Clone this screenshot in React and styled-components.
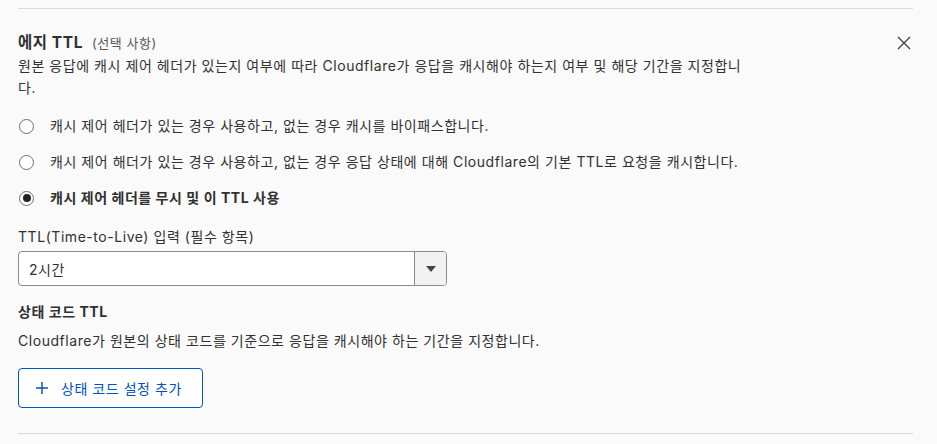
import React, { useState } from 'react'
import styled, { createGlobalStyle } from 'styled-components'

const Global = createGlobalStyle`
  html, body { margin: 0; padding: 0; background: #fafafa; }
  body {
    font-family: Inter, "Noto Sans CJK KR", sans-serif;
    color: #313131;
    letter-spacing: 0.55px;
    -webkit-font-smoothing: antialiased;
  }
`

const Page = styled.div`
  padding: 8px 24px 0 18px;
  width: 937px;
  box-sizing: border-box;
`

const Section = styled.section`
  border-top: 1px solid #d9d9d9;
  border-bottom: 1px solid #d9d9d9;
  padding: 22px 0 25px;
`

const Header = styled.div`
  display: flex;
  justify-content: space-between;
  align-items: center;
`

const Title = styled.h3`
  margin: 0;
  font-size: 15.5px;
  font-weight: 700;
  color: #313131;
  line-height: 24px;
`

const Optional = styled.span`
  font-size: 13px;
  font-weight: 400;
  color: #595959;
  margin-left: 9px;
`

const CloseButton = styled.button`
  border: 0;
  background: none;
  padding: 0;
  margin-right: 2px;
  width: 14px;
  height: 14px;
  display: flex;
  color: #404040;
  cursor: pointer;
`

const Desc = styled.p`
  margin: ${p => p.$mt || 0}px 0 0;
  font-size: 14px;
  line-height: 22px;
  color: #313131;
  max-width: ${p => p.$max || 'none'};
`

const RadioList = styled.div`
  display: flex;
  flex-direction: column;
  gap: 14px;
  margin-top: 16px;
`

const RadioRow = styled.label`
  display: flex;
  align-items: center;
  gap: 16px;
  font-size: 14px;
  line-height: 22px;
  font-weight: ${p => (p.$checked ? 700 : 400)};
  padding-left: 1px;
  cursor: pointer;
`

const Circle = styled.span`
  width: 15px;
  height: 15px;
  border-radius: 50%;
  border: 1px solid #6e6e6e;
  box-sizing: border-box;
  background: #fff;
  display: flex;
  align-items: center;
  justify-content: center;
  flex-shrink: 0;

  &::after {
    content: '';
    width: 8px;
    height: 8px;
    border-radius: 50%;
    background: #222;
    display: ${p => (p.$checked ? 'block' : 'none')};
  }
`

const FieldLabel = styled.div`
  font-size: 14px;
  line-height: 22px;
  margin-top: 17px;
`

const Select = styled.div`
  margin-top: 3px;
  width: 429px;
  height: 35px;
  box-sizing: border-box;
  border: 1px solid #8a8a8a;
  border-radius: 4px;
  background: #fff;
  display: flex;
  overflow: hidden;
`

const SelectValue = styled.div`
  flex: 1;
  padding-left: 10px;
  display: flex;
  align-items: center;
  font-size: 14px;
`

const SelectArrow = styled.div`
  width: 31px;
  border-left: 1px solid #8a8a8a;
  background: #f2f2f2;
  display: flex;
  align-items: center;
  justify-content: center;
`

const SubTitle = styled.h4`
  margin: 15px 0 0;
  font-size: 14px;
  line-height: 22px;
  font-weight: 700;
`

const AddButton = styled.button`
  margin-top: 16px;
  height: 40px;
  padding: 0 20px 0 17px;
  border: 1px solid #0051c3;
  border-radius: 4px;
  background: #fff;
  color: #0051c3;
  font-family: inherit;
  font-size: 14px;
  letter-spacing: inherit;
  display: flex;
  align-items: center;
  gap: 13px;
  cursor: pointer;
`

const options = [
  '캐시 제어 헤더가 있는 경우 사용하고, 없는 경우 캐시를 바이패스합니다.',
  '캐시 제어 해더가 있는 경우 사용하고, 없는 경우 응답 상태에 대해 Cloudflare의 기본 TTL로 요청을 캐시합니다.',
  '캐시 제어 헤더를 무시 및 이 TTL 사용',
]

export default function App() {
  const [selected, setSelected] = useState(2)
  return (
    <Page>
      <Global />
      <Section>
        <Header>
          <Title>
            에지 TTL<Optional>(선택 사항)</Optional>
          </Title>
          <CloseButton aria-label="닫기">
            <svg width="14" height="14" viewBox="0 0 14 14">
              <path d="M1 1L13 13M13 1L1 13" stroke="currentColor" strokeWidth="1.3" />
            </svg>
          </CloseButton>
        </Header>
        <Desc $mt={0} $max="728px">
          원본 응답에 캐시 제어 헤더가 있는지 여부에 따라 Cloudflare가 응답을 캐시해야 하는지 여부 및 해당 기간을 지정합니다.
        </Desc>
        <RadioList>
          {options.map((text, i) => (
            <RadioRow key={i} $checked={selected === i} onClick={() => setSelected(i)}>
              <Circle $checked={selected === i} />
              {text}
            </RadioRow>
          ))}
        </RadioList>
        <FieldLabel>TTL(Time-to-Live) 입력 (필수 항목)</FieldLabel>
        <Select>
          <SelectValue>2시간</SelectValue>
          <SelectArrow>
            <svg width="10" height="6" viewBox="0 0 10 6">
              <path d="M0 0H10L5 6Z" fill="#444" />
            </svg>
          </SelectArrow>
        </Select>
        <SubTitle>상태 코드 TTL</SubTitle>
        <Desc $mt={7}>Cloudflare가 원본의 상태 코드를 기준으로 응답을 캐시해야 하는 기간을 지정합니다.</Desc>
        <AddButton>
          <svg width="12" height="12" viewBox="0 0 12 12">
            <path d="M6 0V12M0 6H12" stroke="currentColor" strokeWidth="1.4" />
          </svg>
          상태 코드 설정 추가
        </AddButton>
      </Section>
    </Page>
  )
}
